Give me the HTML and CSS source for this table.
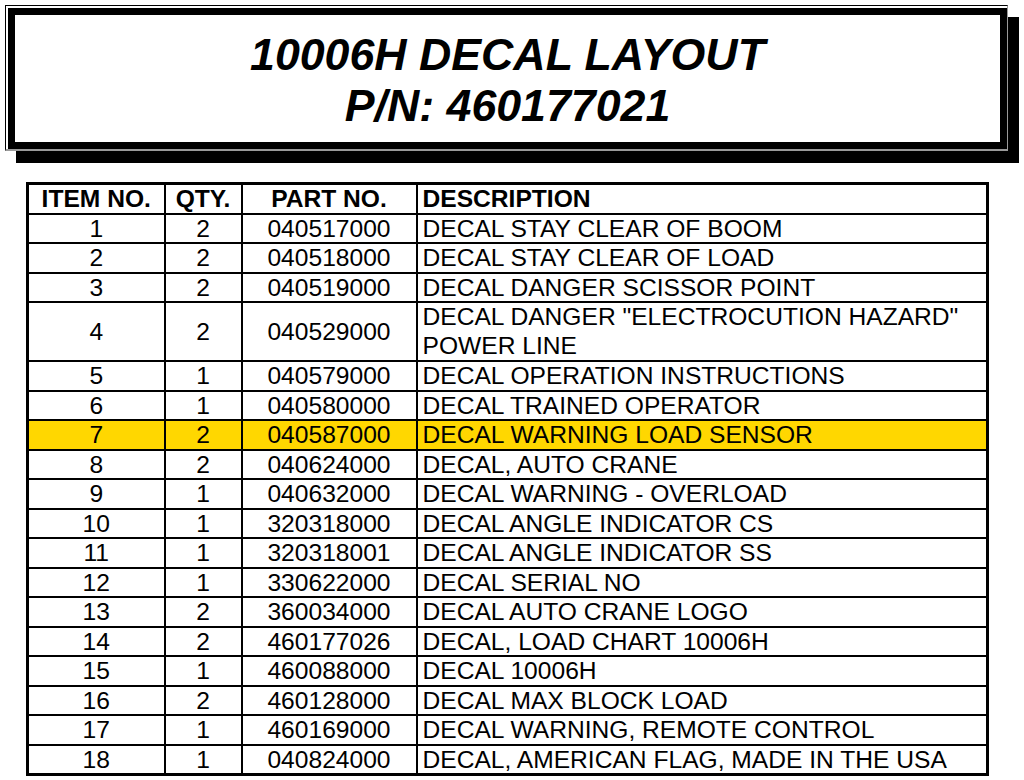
FILE: index.html
```html
<!DOCTYPE html>
<html>
<head>
<meta charset="utf-8">
<title>10006H Decal Layout</title>
<link rel="stylesheet" href="styles.css">
</head>
<body>
<div class="title-frame">
  <div class="title-box">
    <h1 class="title">10006H DECAL LAYOUT<br>P/N: 460177021</h1>
  </div>
</div>
<table class="parts">
  <colgroup>
    <col class="c-item"><col class="c-qty"><col class="c-part"><col class="c-desc">
  </colgroup>
  <thead>
    <tr><th>ITEM NO.</th><th>QTY.</th><th>PART NO.</th><th class="desc">DESCRIPTION</th></tr>
  </thead>
  <tbody>
    <tr><td>1</td><td>2</td><td>040517000</td><td class="desc">DECAL STAY CLEAR OF BOOM</td></tr>
    <tr><td>2</td><td>2</td><td>040518000</td><td class="desc">DECAL STAY CLEAR OF LOAD</td></tr>
    <tr><td>3</td><td>2</td><td>040519000</td><td class="desc">DECAL DANGER SCISSOR POINT</td></tr>
    <tr class="tall"><td>4</td><td>2</td><td>040529000</td><td class="desc">DECAL DANGER "ELECTROCUTION HAZARD"<br>POWER LINE</td></tr>
    <tr><td>5</td><td>1</td><td>040579000</td><td class="desc">DECAL OPERATION INSTRUCTIONS</td></tr>
    <tr><td>6</td><td>1</td><td>040580000</td><td class="desc">DECAL TRAINED OPERATOR</td></tr>
    <tr class="hl"><td>7</td><td>2</td><td>040587000</td><td class="desc">DECAL WARNING LOAD SENSOR</td></tr>
    <tr><td>8</td><td>2</td><td>040624000</td><td class="desc">DECAL, AUTO CRANE</td></tr>
    <tr><td>9</td><td>1</td><td>040632000</td><td class="desc">DECAL WARNING - OVERLOAD</td></tr>
    <tr><td>10</td><td>1</td><td>320318000</td><td class="desc">DECAL ANGLE INDICATOR CS</td></tr>
    <tr><td>11</td><td>1</td><td>320318001</td><td class="desc">DECAL ANGLE INDICATOR SS</td></tr>
    <tr><td>12</td><td>1</td><td>330622000</td><td class="desc">DECAL SERIAL NO</td></tr>
    <tr><td>13</td><td>2</td><td>360034000</td><td class="desc">DECAL AUTO CRANE LOGO</td></tr>
    <tr><td>14</td><td>2</td><td>460177026</td><td class="desc">DECAL, LOAD CHART 10006H</td></tr>
    <tr><td>15</td><td>1</td><td>460088000</td><td class="desc">DECAL 10006H</td></tr>
    <tr><td>16</td><td>2</td><td>460128000</td><td class="desc">DECAL MAX BLOCK LOAD</td></tr>
    <tr><td>17</td><td>1</td><td>460169000</td><td class="desc">DECAL WARNING, REMOTE CONTROL</td></tr>
    <tr><td>18</td><td>1</td><td>040824000</td><td class="desc">DECAL, AMERICAN FLAG, MADE IN THE USA</td></tr>
  </tbody>
</table>
</body>
</html>
```
FILE: styles.css
```css
html, body {
  margin: 0;
  padding: 0;
  background: #fff;
}
body {
  font-family: "Liberation Sans", Arial, sans-serif;
  color: #000;
  padding: 5px 0 0 5px;
  width: 1024px;
  height: 780px;
  box-sizing: border-box;
  overflow: hidden;
}
.title-frame {
  width: 1003px;
  box-sizing: border-box;
  border-top: 1px solid #000;
  border-left: 1px solid #000;
  border-right: 1px solid #9a9a9a;
  border-bottom: 2px solid #9a9a9a;
  padding: 2px 0 0 2px;
  box-shadow: 11px 12px 0 #000;
}
.title-box {
  border: 7px solid #000;
  height: 141px;
  box-sizing: border-box;
  padding-top: 14px;
}
.title {
  margin: 0;
  font-size: 44.7px;
  line-height: 51px;
  font-weight: bold;
  font-style: italic;
  text-align: center;
}
.parts {
  margin: 31px 0 0 21px;
  width: 960px;
  border-collapse: collapse;
  border: 3px solid #000;
  table-layout: fixed;
  font-size: 24.6px;
}
.c-item { width: 137px; }
.c-qty { width: 77px; }
.c-part { width: 175px; }
.c-desc { width: 571px; }
.parts th, .parts td {
  border: 2px solid #000;
  padding: 0;
  line-height: 27.5px;
  text-align: center;
  white-space: nowrap;
}
.parts th {
  font-weight: bold;
}
.parts .desc {
  text-align: left;
  padding-left: 5px;
}
.parts .tall .desc {
  line-height: 28.5px;
}
.parts .hl td {
  background: #ffd700;
}
```
